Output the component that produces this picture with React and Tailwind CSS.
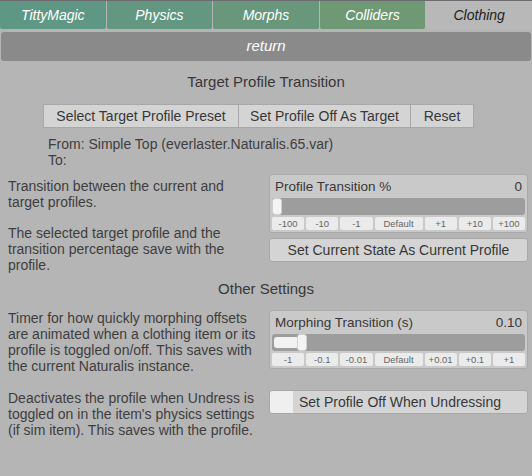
import React from 'react';

const tabs = [
  { label: 'TittyMagic', bg: 'bg-[#5f9785]' },
  { label: 'Physics', bg: 'bg-[#639782]' },
  { label: 'Morphs', bg: 'bg-[#69977b]' },
  { label: 'Colliders', bg: 'bg-[#6f9874]' },
];

const Slider = ({ label, value, pct, steps }) => (
  <div className="bg-[#c9c9c9] border border-[#a9a9a9] rounded-[3px] px-[2px] pt-[3px] pb-[2px]">
    <div className="flex justify-between px-[3px] text-[13.5px] leading-[18px] text-[#383838]">
      <span>{label}</span>
      <span>{value}</span>
    </div>
    <div className="relative h-[17px] mt-[2px] bg-[#9d9d9d] rounded-[3px]">
      {pct > 0 && (
        <div
          className="absolute left-[2px] top-[3px] bottom-[3px] bg-[#f2f2f2] rounded-[3px]"
          style={{ width: pct + 'px' }}
        />
      )}
      <div
        className="absolute top-0 bottom-0 w-[10px] bg-[#f4f4f4] rounded-[3px] border border-[#d0d0d0]"
        style={{ left: pct + 'px' }}
      />
    </div>
    <div className="flex gap-[2px] mt-[2px]">
      {steps.map((s) => (
        <div
          key={s}
          className={
            (s === 'Default' ? 'w-[48px]' : 'flex-1') +
            ' h-[13px] bg-[#ebebeb] rounded-[2px] text-[9.5px] leading-[13px] text-center text-[#666]'
          }
        >
          {s}
        </div>
      ))}
    </div>
  </div>
);

const BigButton = ({ children, className = '' }) => (
  <div
    className={
      'h-[24px] bg-[#d4d4d4] border border-[#a8a8a8] rounded-[3px] text-[14px] leading-[22px] text-[#383838] ' +
      className
    }
  >
    {children}
  </div>
);

export default function App() {
  return (
    <div
      className="w-[532px] h-[476px] bg-[#b5b5b5] border-t border-[#6d6a70] overflow-hidden text-[#3e3e3e]"
      style={{ fontFamily: '"Liberation Sans", Arial, sans-serif' }}
    >
      {/* Tabs */}
      <div className="flex gap-px h-[28px]">
        {tabs.map((t) => (
          <div
            key={t.label}
            className={t.bg + ' flex-1 rounded-b-[2px] flex items-center justify-center italic text-[14px] text-white'}
          >
            {t.label}
          </div>
        ))}
        <div className="flex-1 bg-[#b8b8b8] flex items-center justify-center italic text-[14px] text-[#222]">
          Clothing
        </div>
      </div>

      {/* Return bar */}
      <div className="mx-px mt-[3px] h-[29px] bg-[#8a8a8a] rounded-[3px] flex items-center justify-center italic text-[15px] text-white">
        return
      </div>

      {/* Target Profile Transition */}
      <div className="mt-[12px] text-center text-[15px] leading-[18px] text-[#383838]">
        Target Profile Transition
      </div>
      <div className="mt-[13px] ml-[43px] flex h-[24px] text-[14px] text-[#383838]">
        <div className="w-[196px] bg-[#d4d4d4] border border-[#a8a8a8] flex items-center justify-center">
          Select Target Profile Preset
        </div>
        <div className="w-[172px] bg-[#d4d4d4] border border-l-0 border-[#a8a8a8] flex items-center justify-center">
          Set Profile Off As Target
        </div>
        <div className="w-[63px] bg-[#d4d4d4] border border-l-0 border-[#a8a8a8] flex items-center justify-center">
          Reset
        </div>
      </div>
      <div className="mt-[8px] ml-[48px] text-[14px] leading-[16px]">
        <div>From: Simple Top (everlaster.Naturalis.65.var)</div>
        <div>To:</div>
      </div>

      <div className="mt-[6px] flex">
        <div className="w-[262px] pl-[8px] pr-[4px] pt-[4px] text-[14px] leading-[16px]">
          <p>Transition between the current and target profiles.</p>
          <p className="mt-[15px]">The selected target profile and the transition percentage save with the profile.</p>
        </div>
        <div className="w-[259px] ml-[7px] flex flex-col gap-[5px]">
          <Slider
            label="Profile Transition %"
            value="0"
            pct={0}
            steps={['-100', '-10', '-1', 'Default', '+1', '+10', '+100']}
          />
          <BigButton className="text-center">Set Current State As Current Profile</BigButton>
        </div>
      </div>

      {/* Other Settings */}
      <div className="mt-[7px] text-center text-[15px] leading-[18px] text-[#383838]">Other Settings</div>

      <div className="mt-[12px] flex">
        <div className="w-[262px] pl-[8px] pr-[2px] text-[14px] leading-[16px]">
          <p>
            Timer for how quickly morphing offsets are animated when a clothing item or its profile is toggled
            on/off. This saves with the current Naturalis instance.
          </p>
          <p className="mt-[16px]">
            Deactivates the profile when Undress is toggled on in the item's physics settings (if sim item). This
            saves with the profile.
          </p>
        </div>
        <div className="w-[259px] ml-[7px] flex flex-col">
          <Slider
            label="Morphing Transition (s)"
            value="0.10"
            pct={25}
            steps={['-1', '-0.1', '-0.01', 'Default', '+0.01', '+0.1', '+1']}
          />
          <BigButton className="mt-[21px] flex items-center">
            <div className="w-[23px] h-full bg-[#efefef] rounded-l-[3px]" />
            <span className="ml-[6px]">Set Profile Off When Undressing</span>
          </BigButton>
        </div>
      </div>
    </div>
  );
}
